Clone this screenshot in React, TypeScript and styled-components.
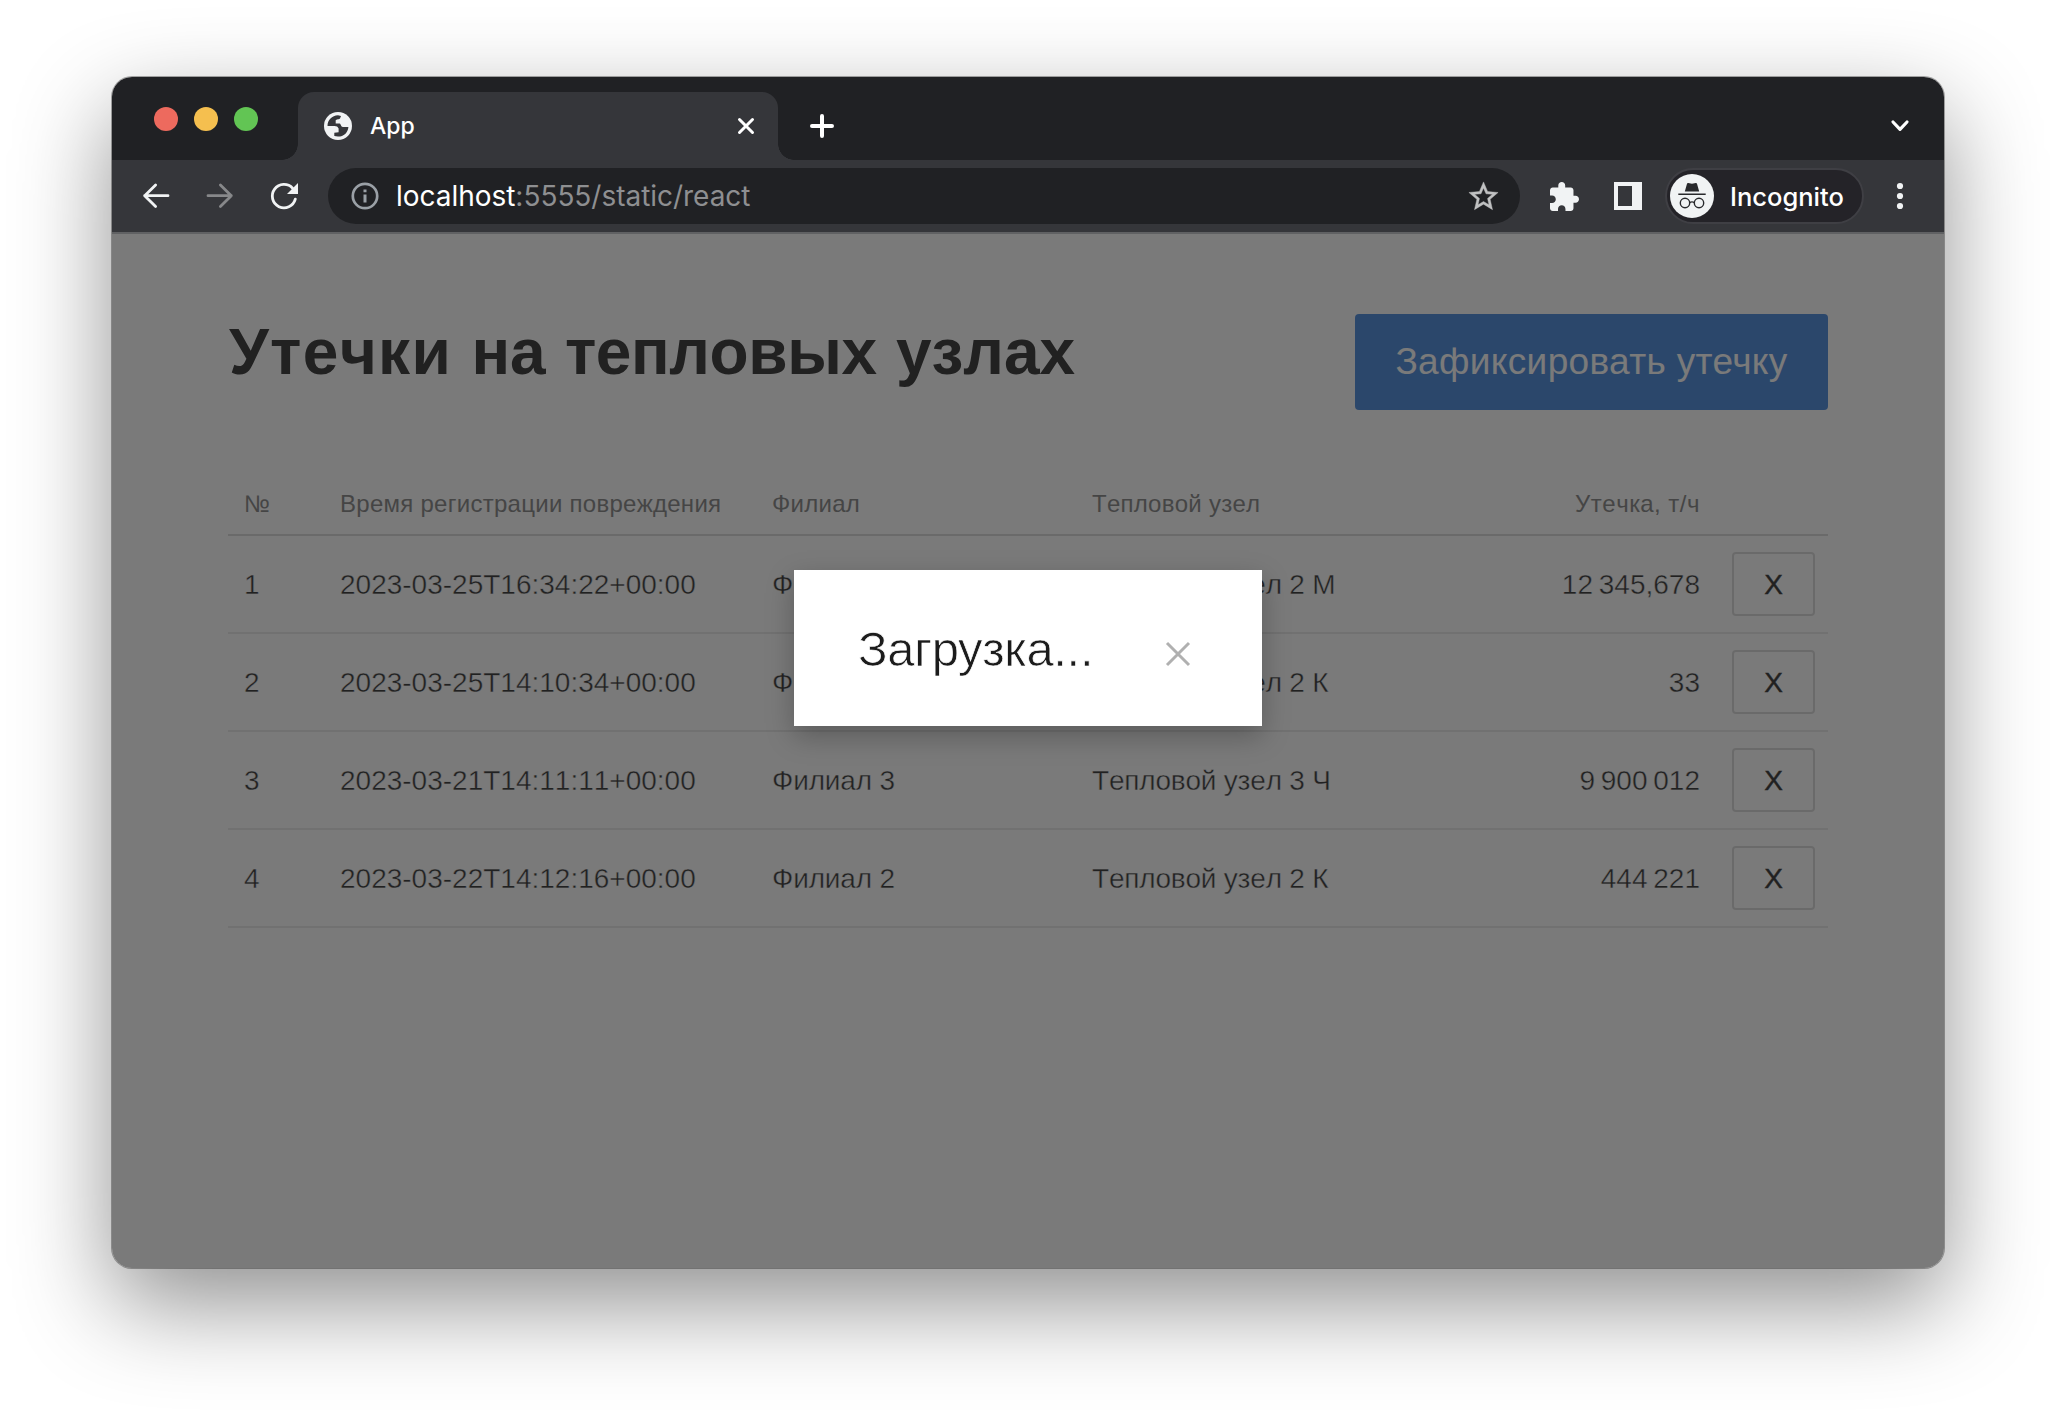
import React from "react";
import styled, { createGlobalStyle } from "styled-components";

const GlobalStyle = createGlobalStyle`
  * { box-sizing: border-box; }
  body { margin: 0; background: #fff; }
`;

const system = `Inter, Roboto, "Liberation Sans", sans-serif`;
const helvetica = `"Liberation Sans", Arial, sans-serif`;

const Desktop = styled.div`
  height: 1416px;
  padding: 77px 112px 148px;
  display: flex;
`;

const BrowserWindow = styled.div`
  flex: 1;
  display: flex;
  flex-direction: column;
  overflow: hidden;
  border-radius: 20px;
  background: #fff;
  box-shadow: 0 0 0 1px rgba(0, 0, 0, 0.32), 0 36px 96px rgba(0, 0, 0, 0.44);
`;

const TabStrip = styled.div`
  height: 83px;
  flex: none;
  display: flex;
  align-items: flex-end;
  padding: 0 35px 0 42px;
  background: #202124;
`;

const TrafficLights = styled.div`
  display: flex;
  gap: 16px;
  margin: 0 40px 29px 0;
`;

const Light = styled.span<{ $color: string }>`
  width: 24px;
  height: 24px;
  border-radius: 50%;
  background: ${(p) => p.$color};
`;

const Tab = styled.div`
  position: relative;
  width: 480px;
  height: 68px;
  display: flex;
  align-items: center;
  padding: 0 23px 0 26px;
  border-radius: 16px 16px 0 0;
  background: #35363a;
  &::before,
  &::after {
    content: "";
    position: absolute;
    bottom: 0;
    width: 16px;
    height: 16px;
  }
  &::before {
    left: -16px;
    background: radial-gradient(circle at 0 0, transparent 15.5px, #35363a 16px);
  }
  &::after {
    right: -16px;
    background: radial-gradient(circle at 100% 0, transparent 15.5px, #35363a 16px);
  }
`;

const TabTitle = styled.span`
  flex: 1;
  margin-left: 18px;
  font: 500 23px/32px ${system};
  color: #fff;
`;

const StripButton = styled.span<{ $left?: number }>`
  height: 68px;
  display: flex;
  align-items: center;
  margin-left: ${(p) => (p.$left === undefined ? "auto" : `${p.$left}px`)};
`;

const Icon = styled.svg`
  display: block;
  flex: none;
  overflow: visible;
`;

const Toolbar = styled.div`
  height: 74px;
  flex: none;
  display: flex;
  align-items: center;
  padding: 0 41px 0 30px;
  background: #35363a;
  border-bottom: 2px solid #606163;
`;

const NavButtons = styled.div`
  display: flex;
  align-items: center;
  gap: 36px;
  width: 186px;
`;

const Omnibox = styled.div`
  width: 1192px;
  height: 56px;
  display: flex;
  align-items: center;
  padding: 0 19px 0 23px;
  border-radius: 28px;
  background: #202124;
`;

const Url = styled.span`
  flex: 1;
  margin-left: 17px;
  font: 400 28px/36px ${system};
  letter-spacing: -0.03px;
  color: #8e8f91;
`;

const UrlHost = styled.span`
  color: #fff;
`;

const Actions = styled.div`
  display: flex;
  align-items: center;
  gap: 35px;
  margin-left: 30px;
`;

const ProfileChip = styled.div`
  width: 199px;
  height: 56px;
  display: flex;
  align-items: center;
  margin-left: 23px;
  padding-left: 3px;
  border: 2px solid #3f3f44;
  border-radius: 28px;
  background: #242328;
`;

const ProfileName = styled.span`
  margin-left: 16px;
  padding-top: 1px;
  font: 500 25.5px/36px ${system};
  color: #fff;
`;

const MenuButton = styled.span`
  margin-left: auto;
`;

const Viewport = styled.div`
  position: relative;
  flex: 1;
  padding: 80px 116px 0;
`;

const PageHeader = styled.header`
  height: 162px;
  display: flex;
  justify-content: space-between;
  align-items: flex-start;
`;

const Title = styled.h1`
  margin: 0;
  padding-left: 1px;
  font: 700 64px/76px ${helvetica};
  font-kerning: none;
  word-spacing: 1.5px;
  color: #222;
`;

const Tracked = styled.span<{ $by: number }>`
  letter-spacing: ${(p) => p.$by}px;
`;

const PrimaryButton = styled.button`
  width: 473px;
  height: 96px;
  padding: 0;
  border: 0;
  border-radius: 4px;
  background: #3b7fd9;
  color: #fff;
  font: 400 37px/96px ${helvetica};
  letter-spacing: 0.35px;
`;

const Table = styled.div`
  width: 1600px;
`;

const TableRow = styled.div<{ $head?: boolean }>`
  display: grid;
  grid-template-columns: 96px 432px 320px 320px 320px 112px;
  align-items: center;
  height: ${(p) => (p.$head ? 60 : 98)}px;
  border-bottom: 2px solid ${(p) => (p.$head ? "#d8d8d8" : "#e9e9e9")};
`;

const HeadCell = styled.div<{ $end?: boolean }>`
  padding: 0 16px 2px;
  font: 400 24px/32px ${helvetica};
  font-kerning: none;
  letter-spacing: ${(p) => (p.$end ? 0.5 : 0.27)}px;
  text-align: ${(p) => (p.$end ? "right" : "left")};
  white-space: nowrap;
  color: #7c7c7c;
`;

const Cell = styled.div<{ $end?: boolean; $tracking?: number }>`
  padding: 2px 16px 0;
  font: 400 28px/36px ${helvetica};
  font-kerning: none;
  -webkit-text-stroke: 0.4px #fff;
  letter-spacing: ${(p) => p.$tracking ?? 0}px;
  word-spacing: ${(p) => (p.$end ? -2 : 0)}px;
  text-align: ${(p) => (p.$end ? "right" : "left")};
  white-space: nowrap;
  color: #222;
`;

const RemoveButton = styled.button`
  width: 83px;
  height: 64px;
  margin-left: 16px;
  padding: 1px 0 0;
  border: 2px solid #d8d8d8;
  border-radius: 4px;
  background: transparent;
  font: 400 28px/59px ${helvetica};
  -webkit-text-stroke: 0.4px #222;
  color: #222;
`;

const Overlay = styled.div`
  position: absolute;
  inset: 0;
  display: flex;
  justify-content: center;
  align-items: flex-start;
  padding-top: 336px;
  background: rgba(34, 34, 34, 0.6);
`;

const Modal = styled.div`
  width: 468px;
  height: 156px;
  display: flex;
  justify-content: space-between;
  align-items: center;
  padding: 2px 72px 0 64px;
  background: #fff;
  box-shadow: 0 10px 26px rgba(0, 0, 0, 0.25);
`;

const ModalText = styled.span`
  font: 400 49px/56px ${helvetica};
  letter-spacing: -0.35px;
  -webkit-text-stroke: 0.7px #fff;
  color: #1c1c1c;
`;

const ModalClose = styled.span`
  padding-top: 10px;
`;

const rows = [
  { time: "2023-03-25T16:34:22+00:00", branch: "Филиал 2", node: "Тепловой узел 2 М", leak: "12 345,678" },
  { time: "2023-03-25T14:10:34+00:00", branch: "Филиал 2", node: "Тепловой узел 2 К", leak: "33" },
  { time: "2023-03-21T14:11:11+00:00", branch: "Филиал 3", node: "Тепловой узел 3 Ч", leak: "9 900 012" },
  { time: "2023-03-22T14:12:16+00:00", branch: "Филиал 2", node: "Тепловой узел 2 К", leak: "444 221" },
];

const GlobeIcon = () => (
  <Icon width="28" height="28" viewBox="0 0 28 28">
    <circle cx="14" cy="14" r="14" fill="#f1f3f4" />
    <path
      d="M3.5 14C3.5 8.2 8 3.5 14 3.3L17 3.9 16 6.4C15.6 7.4 12.2 7 11.7 8.2V11.4H15.6C16.8 11.6 17 14.8 18.8 14.9H24.4C24 20.4 19.8 24.6 14 24.6L10.3 24V20.8L14.6 20.2V16.6C14 14.8 12.4 14 10.6 14Z"
      fill="#35363a"
    />
  </Icon>
);

type StrokesProps = { w: number; h: number; d: string; sw: number; color?: string; cap?: "round" | "butt" };

const Strokes = ({ w, h, d, sw, color = "#fff", cap = "round" }: StrokesProps) => (
  <Icon
    width={w}
    height={h}
    viewBox={`0 0 ${w} ${h}`}
    fill="none"
    stroke={color}
    strokeWidth={sw}
    strokeLinecap={cap}
    strokeLinejoin="round"
  >
    <path d={d} />
  </Icon>
);

const ReloadIcon = () => (
  <Icon width="28" height="28" viewBox="0 0 28 28">
    <path d="M25.3 17.2A11.7 11.7 0 1 1 22.6 6.2" fill="none" stroke="#f1f3f4" strokeWidth="2.8" strokeLinecap="round" />
    <path d="M28 1V12H17Z" fill="#f1f3f4" />
  </Icon>
);

const InfoIcon = () => (
  <Icon width="28" height="28" viewBox="0 0 28 28">
    <circle cx="14" cy="14" r="12.2" fill="none" stroke="#9aa0a6" strokeWidth="2.7" />
    <path d="M12.5 7.4h3v2.8h-3zM12.5 12.4h3v8h-3z" fill="#9aa0a6" />
  </Icon>
);

const StarIcon = () => (
  <Icon width="35" height="35" viewBox="0 0 24 24" fill="#c0c1c2" stroke="#c0c1c2" strokeWidth="0.3">
    <path d="M22 9.24l-7.19-.62L12 2 9.19 8.63 2 9.24l5.46 4.73L5.82 21 12 17.27 18.18 21l-1.63-7.03L22 9.24zM12 15.4l-3.76 2.27 1-4.28-3.32-2.88 4.38-.38L12 6.1l1.71 4.04 4.38.38-3.32 2.88 1 4.28L12 15.4z" />
  </Icon>
);

const PuzzleIcon = () => (
  <Icon width="29" height="29" viewBox="2 1 21 21" fill="#f1f3f4">
    <path d="M20.5 11H19V7c0-1.1-.9-2-2-2h-4V3.5C13 2.12 11.88 1 10.5 1S8 2.12 8 3.5V5H4c-1.1 0-1.99.9-1.99 2v3.8H3.5c1.49 0 2.7 1.21 2.7 2.7s-1.21 2.7-2.7 2.7H2V20c0 1.1.9 2 2 2h3.8v-1.5c0-1.49 1.21-2.7 2.7-2.7 1.49 0 2.7 1.21 2.7 2.7V22H17c1.1 0 2-.9 2-2v-4h1.5c1.38 0 2.5-1.12 2.5-2.5S21.88 11 20.5 11z" />
  </Icon>
);

const SidePanelIcon = () => (
  <Icon width="28" height="28" viewBox="0 0 28 28">
    <path d="M0 0H28V28H0ZM4 4V24H18V4Z" fill="#f1f3f4" fillRule="evenodd" />
  </Icon>
);

const IncognitoIcon = () => (
  <Icon width="44" height="44" viewBox="0 0 44 44">
    <circle cx="22" cy="22" r="22" fill="#f1f3f4" />
    <path d="M14.8 17.4 17 9.7Q17.3 8.8 18.3 9L22 9.8 25.7 9Q26.7 8.8 27 9.7L29.2 17.4Z" fill="#28292c" />
    <path d="M8.3 20.2H35.7" stroke="#28292c" strokeWidth="1.5" />
    <g fill="none" stroke="#28292c" strokeWidth="1.4">
      <circle cx="15" cy="29" r="4.7" />
      <circle cx="29" cy="29" r="4.7" />
      <path d="M19.6 28.6Q22 27.2 24.4 28.6" />
    </g>
  </Icon>
);

const DotsIcon = () => (
  <Icon width="6" height="26" viewBox="0 0 6 26" fill="#f1f3f4">
    <circle cx="3" cy="3" r="3.1" />
    <circle cx="3" cy="13" r="3.1" />
    <circle cx="3" cy="23" r="3.1" />
  </Icon>
);

export default function App() {
  return (
    <>
      <GlobalStyle />
      <Desktop>
        <BrowserWindow>
          <TabStrip>
            <TrafficLights>
              <Light $color="#ed6a5e" />
              <Light $color="#f5bf4f" />
              <Light $color="#62c554" />
            </TrafficLights>
            <Tab>
              <GlobeIcon />
              <TabTitle>App</TabTitle>
              <Strokes w={18} h={18} sw={3} d="M2.5 2.5 15.5 15.5M15.5 2.5 2.5 15.5" />
            </Tab>
            <StripButton $left={31}>
              <Strokes w={26} h={26} sw={4} d="M13 3V23M3 13H23" />
            </StripButton>
            <StripButton>
              <Strokes w={18} h={12} sw={3.2} d="M2 2 9 9.3 16 2" />
            </StripButton>
          </TabStrip>
          <Toolbar>
            <NavButtons>
              <Strokes w={28} h={28} sw={2.8} d="M2.6 13.7H26M13.6 3 2.7 13.7 13.6 24.6" color="#f1f3f4" />
              <Strokes w={28} h={28} sw={2.8} d="M2 13.7H25.3M14.4 3 25.3 13.7 14.4 24.6" color="#87888a" />
              <ReloadIcon />
            </NavButtons>
            <Omnibox>
              <InfoIcon />
              <Url>
                <UrlHost>localhost</UrlHost>:5555/static/react
              </Url>
              <StarIcon />
            </Omnibox>
            <Actions>
              <PuzzleIcon />
              <SidePanelIcon />
            </Actions>
            <ProfileChip>
              <IncognitoIcon />
              <ProfileName>Incognito</ProfileName>
            </ProfileChip>
            <MenuButton>
              <DotsIcon />
            </MenuButton>
          </Toolbar>
          <Viewport>
            <PageHeader>
              <Title>
                <Tracked $by={1.3}>Утечки</Tracked> <Tracked $by={0}>на</Tracked>{" "}
                <Tracked $by={-0.4}>тепловых</Tracked> <Tracked $by={0}>узлах</Tracked>
              </Title>
              <PrimaryButton>Зафиксировать утечку</PrimaryButton>
            </PageHeader>
            <Table>
              <TableRow $head>
                <HeadCell>№</HeadCell>
                <HeadCell>Время регистрации повреждения</HeadCell>
                <HeadCell>Филиал</HeadCell>
                <HeadCell>Тепловой узел</HeadCell>
                <HeadCell $end>Утечка, т/ч</HeadCell>
              </TableRow>
              {rows.map((row, i) => (
                <TableRow key={row.time}>
                  <Cell>{i + 1}</Cell>
                  <Cell>{row.time}</Cell>
                  <Cell $tracking={-0.15}>{row.branch}</Cell>
                  <Cell $tracking={-0.2}>{row.node}</Cell>
                  <Cell $end>{row.leak}</Cell>
                  <RemoveButton>X</RemoveButton>
                </TableRow>
              ))}
            </Table>
            <Overlay>
              <Modal>
                <ModalText>Загрузка...</ModalText>
                <ModalClose>
                  <Strokes w={24} h={24} sw={3} d="M1 1 23 23M23 1 1 23" color="#b0b0b0" cap="butt" />
                </ModalClose>
              </Modal>
            </Overlay>
          </Viewport>
        </BrowserWindow>
      </Desktop>
    </>
  );
}
